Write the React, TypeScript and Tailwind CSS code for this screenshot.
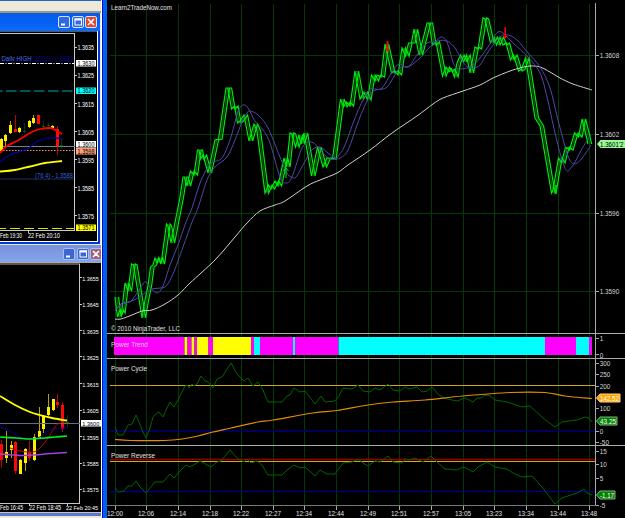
import type { ReactNode } from "react";
import clsx from "clsx";

type Point = [x: number, y: number];
type Candle = [x: number, high: number, low: number, top: number, bottom: number, color: string];

const YELLOW = "#ffee00";
const RED = "#ff0808";
const GREEN = "#005a00";

const gridX = [115, 146, 178, 210, 241, 273, 304, 336, 368, 399, 431, 463, 494, 526, 558, 589];
const times = [
  "12:00", "12:06", "12:14", "12:18", "12:22", "12:27", "12:34", "12:44",
  "12:49", "12:51", "12:57", "13:05", "13:23", "13:34", "13:44", "13:48",
];

const price: Point[] = [
  [115, 297], [117.5, 317], [120, 310], [121.5, 313], [125, 283], [128, 291], [131.5, 264],
  [133.5, 265], [142, 318], [145, 300], [148, 286], [150.5, 267], [153, 265], [155, 258], [157, 263], [159, 258],
  [161, 264], [166.5, 224], [168, 226], [171, 243], [180, 197], [183, 177], [184.5, 177], [187, 186], [190.5, 171],
  [194, 175], [197.5, 150], [199, 150], [200.5, 159], [203, 155], [208, 173], [215, 140], [218.5, 139],
  [221, 122], [226, 88], [228, 88], [231.5, 109], [234.5, 106], [237.5, 123], [240, 121], [244, 115],
  [249, 141], [254, 124], [257, 131], [265, 193], [268.5, 185], [271, 189], [275, 181], [278, 186],
  [284, 158], [286.5, 167], [290, 133], [292, 134], [295.5, 147], [299, 135], [301, 144], [304, 133],
  [311.5, 176], [317.5, 147], [323, 167], [327, 158], [332.5, 159], [340.5, 99], [343.5, 107],
  [346.5, 102], [350, 106], [355, 71], [360, 99], [364, 92], [367.5, 100], [371.5, 75], [375, 81],
  [377, 75], [381, 77], [385, 44], [391.5, 73], [394.5, 71], [398, 75], [402, 48], [405.5, 56], [408.5, 43],
  [411.5, 43], [414, 29], [419, 55], [427, 23], [429, 23], [432.5, 45], [436, 42], [442.5, 76],
  [446, 67], [449, 72], [451.5, 69], [454.5, 77], [457, 63], [460.5, 55], [463.5, 62], [466.5, 55], [470, 73],
  [475, 47], [478, 49], [483, 18], [485, 19], [490.5, 43], [494, 37], [496.5, 45], [500, 37],
  [503, 45], [506, 43], [510.5, 60], [513.5, 55], [518.5, 71], [521.5, 69], [525.5, 58], [535, 118], [540, 126],
  [551.5, 193], [553, 190], [558.5, 158], [561.5, 163], [565.5, 147], [569.5, 150], [574.5, 133],
  [578.5, 137], [582, 119], [586, 135], [588, 144],
];

const fastAverage =
  "115,311 122,303 130,302 137,293 143,284 146,282 151,288 157,293 163,286 170,265 178,245 186,222 192,208 200,183 208,167 213,162 222,158 230,140 238,112 243,105 248,108 255,121 263,130 270,143 280,177 286,183 292,177 302,148 310,142 317,146 327,157 335,159 339,155 345,145 357,113 368,91 374,89 382,88 392,72 399,64 408,67 417,55 427,43 435,42 441,37 447,42 453,62 457,68 462,69 472,66 480,58 488,47 494,37 498,32 503,33 513,43 528,57 540,73 547,97 555,133 562,160 567,171 570,169 575,162 583,147 591,135";
const slowAverage =
  "115,309 125,303 134,300 145,293 152,289 160,288 166,286 173,274 183,247 192,222 198,208 207,180 215,167 227,157 235,140 242,122 247,113 250,111 258,115 268,128 280,157 287,173 291,177 296,177 303,165 312,150 320,147 328,153 335,158 340,158 348,150 360,117 370,95 376,90 387,87 398,70 403,67 410,66 420,58 430,47 438,41 447,41 455,48 463,62 468,67 473,68 480,65 488,52 500,37 508,35 517,40 528,53 540,67 550,88 558,120 567,153 572,163 577,163 583,157 591,145";
const longAverage =
  "115,319 121,319 132,315 142,311 152,310 165,304 178,295 190,283 215,260 235,237 247,223 260,211 275,205 285,201 307,186 320,180 337,173 348,165 370,150 392,133 417,116 433,104 443,98 463,91 480,85 493,78 510,71 520,68 530,66 540,67 550,72 560,78 573,84 592,90";

const trend: [number, number, string][] = [
  [114, 184.5, "#ff00ff"], [184.5, 187.5, "#ffff00"], [187.5, 191.5, "#ff00ff"], [191.5, 194.5, "#ffff00"],
  [194.5, 197, "#ff00ff"], [197, 208.5, "#ffff00"], [208.5, 213, "#ff00ff"], [213, 251, "#ffff00"],
  [251, 254, "#ff00ff"], [254, 260, "#00ffff"], [260, 293, "#ff00ff"], [293, 295, "#00ffff"],
  [295, 338.5, "#ff00ff"], [338.5, 545, "#00ffff"], [545, 576, "#ff00ff"], [576, 589, "#00ffff"],
  [589, 592, "#ff00ff"],
];

const cycle =
  "115,427 118,435 123,435 125,431 128,425 132,424 136,415 139,422 142,430 146,438 150,428 153,417 156,414 159,412 163,417 166,410 170,402 174,407 179,398 185,386 187,385 189,388 192,384 194,386 197,384 201,376 205,381 208,382 213,388 217,379 222,377 231,363 237,374 244,381 248,378 253,386 258,382 262,388 268,402 282,402 287,396 290,395 294,388 300,392 305,391 315,404 321,396 325,402 335,401 339,396 343,388 352,389 358,385 363,391 370,392 375,388 380,390 388,384 393,390 400,391 405,387 409,389 417,387 422,392 427,391 432,387 438,394 443,398 457,401 465,398 473,402 477,398 481,398 485,395 490,396 495,400 507,402 522,407 530,406 543,418 555,427 562,422 568,421 577,420 585,417 589,418 592,422";
const cycleAverage =
  "115,439.5 130,440.5 165,440.5 182,439 198,436 213,432 231,428 258,422 273,420 313,413 337,410.5 368,405 393,402 425,400 463,396 510,392.5 545,392.5 565,396 592,398.5";
const reverse =
  "115,488 118,492 124,491 128,486 132,486 136,481 140,487 146,493 150,488 155,482 163,482 170,474 174,478 180,471 186,465 190,467 195,464 200,461 207,465 211,467 217,462 221,461 230,450 237,458 244,462 247,459 251,463 257,461 262,465 268,475 282,475 287,470 294,465 300,468 305,467 315,476 320,470 327,474 335,474 343,463 352,462 358,459 363,463 368,466 375,461 380,462 388,456 393,462 402,463 405,459 409,460 415,458 423,462 431,456 437,462 445,469 457,470 463,467 466,468 473,472 478,467 487,462 495,467 507,469 513,473 522,477 532,476 542,487 555,504 562,498 568,496 577,493 584,489 587,493 592,495";

const upperCandles: Candle[] = [
  [1.5, 138, 152, 139, 151, YELLOW], [5.5, 134, 148, 135, 141, YELLOW], [10.5, 121, 134, 125, 133, YELLOW],
  [15.5, 115, 132, 129, 132, RED], [19.5, 127, 133, 128, 132, YELLOW], [24.5, 123, 133, 131, 132, GREEN],
  [29.5, 120, 128, 121, 127, YELLOW], [33.5, 115, 124, 118, 123, YELLOW], [38.5, 115, 124, 115, 124, RED],
  [43.5, 121, 131, 126, 127, GREEN], [48.5, 123, 128, 125, 126, GREEN], [52.5, 125, 129, 126, 128, YELLOW],
  [57.5, 126, 155, 129, 146, RED], [61.5, 138, 149, 145, 146, GREEN],
];

const lowerCandles: Candle[] = [
  [1.5, 440, 468, 444, 460, RED], [6.5, 431, 463, 452, 458, YELLOW], [11.5, 441, 458, 445, 450, YELLOW],
  [15.5, 441, 474, 442, 471, RED], [20.5, 459, 474, 460, 474, YELLOW], [25.5, 448, 471, 449, 463, YELLOW],
  [29.5, 441, 461, 452, 458, RED], [34.5, 434, 461, 437, 460, YELLOW], [39.5, 407, 438, 431, 438, YELLOW],
  [43.5, 415, 433, 416, 429, YELLOW], [48.5, 394, 416, 407, 415, YELLOW], [53.5, 399, 411, 399, 410, YELLOW],
  [57.5, 394, 408, 402, 405, RED], [62.5, 402, 432, 405, 429, RED], [67.5, 415, 427, 422, 423, GREEN],
];

const toPoints = (points: Point[], shift = 0) =>
  points.map(([x, y]) => `${x + shift},${y}`).join(" ");

// Catmull-Rom spline through the points, as cubic segments
const toCurve = (source: string) => {
  const pts = source.split(" ").map((pair) => pair.split(",").map(Number));
  let d = `M${pts[0][0]} ${pts[0][1]}`;
  for (let i = 0; i < pts.length - 1; i++) {
    const p0 = pts[i - 1] || pts[i];
    const p1 = pts[i];
    const p2 = pts[i + 1];
    const p3 = pts[i + 2] || p2;
    d += `C${p1[0] + (p2[0] - p0[0]) / 6} ${p1[1] + (p2[1] - p0[1]) / 6} `;
    d += `${p2[0] - (p3[0] - p1[0]) / 6} ${p2[1] - (p3[1] - p1[1]) / 6} ${p2[0]} ${p2[1]}`;
  }
  return d;
};

interface LabelProps {
  x: number;
  y: number;
  width?: number;
  size?: number;
  fill?: string;
  children: ReactNode;
}

function Label({ x, y, width, size = 7.5, fill = "#e0e0e0", children }: LabelProps) {
  return (
    <text x={x} y={y} fontSize={size} fill={fill} textLength={width} lengthAdjust="spacingAndGlyphs">
      {children}
    </text>
  );
}

function Candles({ data }: { data: Candle[] }) {
  return (
    <g shapeRendering="crispEdges">
      {data.map(([x, high, low, top, bottom, color]) => (
        <g key={x} fill={color}>
          <rect x={x - 0.5} y={high} width={1} height={low - high} opacity={0.7} />
          <rect x={x - 1.5} y={top} width={3} height={bottom - top} />
        </g>
      ))}
    </g>
  );
}

function PriceTag({ x, y, color, text }: { x: number; y: number; color: string; text: string }) {
  return (
    <g>
      <rect x={x} y={y - 3.5} width={20} height={6.5} fill={color} />
      <Label x={x + 1.5} y={y + 2.3} width={17} size={6.5} fill="#000">{text}</Label>
    </g>
  );
}

function TitleBar({ active }: { active?: boolean }) {
  return (
    <div
      className={clsx(
        "flex shrink-0 items-center justify-end gap-[1.5px]",
        active
          ? "h-[18px] bg-linear-to-b from-[#0b5be6] via-[#0560f2] to-[#0a6cff] pr-[3px]"
          : "h-[17px] bg-linear-to-b from-[#7791dc] via-[#7f9be4] to-[#83a4ee]"
      )}
    >
      {["min", "max", "close"].map((kind) => (
        <svg
          key={kind}
          className={clsx("h-3 w-3 shrink-0", !active && kind === "close" && "-mr-px")}
          viewBox="0 0 12 12"
        >
          <rect
            x="0.5"
            y="0.5"
            width="11"
            height="11"
            rx="1.5"
            stroke={active ? "#d4e2ff" : "#a9bdf0"}
            fill={kind === "close" ? (active ? "#e0482a" : "#a5607c") : active ? "#2f6ae4" : "#3d67d0"}
          />
          {kind === "min" && <path d="M3 8.500h4" stroke="#fff" strokeWidth="2" />}
          {kind === "max" && (
            <>
              <rect x="3" y="3" width="6.500" height="6" stroke="#fff" fill="none" />
              <path d="M2.500 3.500h7.500" stroke="#fff" strokeWidth="2" />
            </>
          )}
          {kind === "close" && <path d="M3 3l6 6M9 3l-6 6" stroke="#fff" strokeWidth="1.600" />}
        </svg>
      ))}
    </div>
  );
}

function UpperChart() {
  const labels: [string, number][] = [
    ["1.3635", 47.5], ["1.3625", 75.5], ["1.3615", 104], ["1.3605", 132], ["1.3595", 160], ["1.3585", 188], ["1.3575", 216],
  ];
  return (
    <svg className="block h-[210px] w-[97px] overflow-visible bg-black" viewBox="0 31 97 210">
      <rect x="0" y="31" width="97" height="1" fill="#555" />
      <g stroke="#c8c8c8" shapeRendering="crispEdges">
        <path d="M0 33.500H74.500V230.500H0" fill="none" />
        {labels.map(([text, y]) => <path key={text} d={`M75 ${Math.round(y) - 0.5}h2`} />)}
        <path d="M28.500 231v2" />
      </g>
      <Label x={1.5} y={60.8} width={30} size={6.6} fill="#4470e0">Daily HIGH</Label>
      <Label x={33.5} y={60.8} width={39.5} size={6.4} fill="#000088">(100.0) - 1.3630</Label>
      <path d="M0 61.500H74" stroke="#000040" />
      <path d="M0 63.500H74" stroke="#fff" strokeDasharray="4 1.500 1 1.500" />
      <path d="M0 91H74" stroke="#00a8a8" strokeWidth="1.200" strokeDasharray="10.500 3.500" strokeDashoffset="8" />
      <path d="M0 146.500H75" stroke="#708090" shapeRendering="crispEdges" />
      <path d="M0 150.500H74" stroke="#f09068" strokeDasharray="1.500 1.500" />
      <path d="M0 179H74" stroke="#1a2c68" />
      <Label x={35} y={177.5} width={38} size={6.8} fill="#3460cc">(76.4) - 1.3588</Label>
      <path d="M0 228.500H74" stroke="#e0e000" strokeDasharray="10 4" strokeDashoffset="4" />
      <Candles data={upperCandles} />
      <g fill="none">
        <path d={toCurve("0,162 10,155 27,149 38,141 50,138 62,138.5")} stroke="#0000b8" strokeWidth="1.200" />
        <path d={toCurve("0,153 7,146 17,141 25,136 30,133 38,129.5 50,128 55,130 62,134")} stroke="#f00" strokeWidth="1.800" />
        <path d={toCurve("0,171.5 15,170 30,166.5 45,163 62,161")} stroke="#ff0" strokeWidth="1.800" />
      </g>
      {labels.map(([text, y]) => (
        <Label key={text} x={77.5} y={y + 2.5} width={16.5} size={6.5} fill="#fff">{text}</Label>
      ))}
      <PriceTag x={76} y={63.5} color="#fff" text="1.3630" />
      <PriceTag x={76} y={91} color="#00ffff" text="1.3620" />
      <PriceTag x={76} y={144.5} color="#fff" text="1.3600" />
      <PriceTag x={76} y={151.5} color="#ffa07a" text="1.3598" />
      <PriceTag x={76} y={228} color="#ffff00" text="1.3571" />
      <Label x={0} y={238.3} width={22} size={6.5} fill="#fff">Feb 19:30</Label>
      <Label x={28} y={238.3} width={32} size={6.5} fill="#fff">22 Feb 20:10</Label>
    </svg>
  );
}

function LowerChart() {
  const labels: [string, number][] = [
    ["1.3655", 278], ["1.3645", 304.5], ["1.3635", 331], ["1.3625", 357], ["1.3615", 384], ["1.3605", 410.5],
    ["1.3595", 437], ["1.3585", 463.5], ["1.3575", 489.5],
  ];
  return (
    <svg className="block h-[250px] w-[101px] overflow-visible bg-black" viewBox="0 262 101 250">
      <rect x="0" y="262" width="101" height="1" fill="#b0a890" />
      <rect x="0" y="263" width="80" height="2" fill="#555" />
      <g stroke="#c8c8c8" shapeRendering="crispEdges">
        <path d="M79.500 264V503.500H0" fill="none" />
        {labels.map(([text, y]) => <path key={text} d={`M80 ${Math.round(y) - 0.5}h2`} />)}
        <path d="M29.500 503v3M67.500 503v3" />
      </g>
      <Candles data={lowerCandles} />
      <path d="M0 423.500H80" stroke="#607080" shapeRendering="crispEdges" />
      <g fill="none">
        <path d={toCurve("0,427 10,431 20,437 28,439 40,437 48,431 55,428.5 67,428")} stroke="#0000a8" />
        <path d={toCurve("10,448 20,451 33,452 40,448 48,438 55,427 60,423 67,422")} stroke="#c00000" />
        <path d={toCurve("0,454 20,455.5 35,455 50,453.5 67,452.5")} stroke="#a040e0" strokeWidth="1.500" />
        <path d={toCurve("0,437 17,438 30,439 45,438 55,437 67,436")} stroke="#00f020" strokeWidth="1.700" />
        <path d={toCurve("0,396 15,405 30,412 40,415 52,418 67,420.5")} stroke="#ff0" strokeWidth="1.800" />
      </g>
      {labels.map(([text, y]) => (
        <Label key={text} x={82.3} y={y + 2.5} width={16.5} size={6} fill="#fff">{text}</Label>
      ))}
      <rect x={81} y={420} width={20} height={6.5} fill="#fff" />
      <Label x={82.3} y={425.6} width={17} size={6} fill="#000">1.3600</Label>
      <Label x={0} y={510} width={23} size={6.5} fill="#fff">Feb 16:45</Label>
      <Label x={29} y={510} width={32} size={6.5} fill="#fff">22 Feb 18:45</Label>
      <Label x={66} y={510} width={32} size={6} fill="#fff">22 Feb 20:45</Label>
    </svg>
  );
}

function GridLines({ from, to }: { from: number; to: number }) {
  return (
    <g stroke="#003a00" shapeRendering="crispEdges">
      {gridX.map((x) => <path key={x} d={`M${x + 0.5} ${from}V${to}`} />)}
    </g>
  );
}

const textWidth = (text: string) =>
  [...text].reduce((sum, ch) => sum + (ch === "." ? 1.8 : ch === "-" ? 2.2 : 3.55), 0);

// Vertical axis line with tick marks and values
function Axis({ from, to, values }: { from: number; to: number; values: [string, number][] }) {
  return (
    <g>
      <path d={`M595.500 ${from}V${to}`} stroke="#aaa" shapeRendering="crispEdges" />
      {values.map(([text, y]) => (
        <g key={text}>
          <path d={`M596 ${Math.round(y) + 0.5}h3`} stroke="#aaa" shapeRendering="crispEdges" />
          <Label x={599.7} y={y + 3.3} size={7.3} width={textWidth(text)} fill="#d4d4d4">{text}</Label>
        </g>
      ))}
    </g>
  );
}

function ValueFlag({ y, right, fill, border, children }: {
  y: number; right: number; fill: string; border: string; children: string;
}) {
  return (
    <g>
      <path d={`M596.500 ${y}l3.500 -4H${right}v8H600z`} fill={fill} stroke={border} />
      <Label x={600} y={y + 2.8} width={right - 601} size={7.5} fill="#fff">{children}</Label>
    </g>
  );
}

function PricePanel() {
  return (
    <svg className="block h-[333px] w-full overflow-visible" viewBox="107 0 518 333">
      <GridLines from={4} to={333} />
      <path d="M110 55.500H595M110 134.500H595M110 213.500H595M110 291.500H595" stroke="#003a00" shapeRendering="crispEdges" />
      <g fill="none">
        <polyline points={toPoints(price, 1.8)} stroke="#006c00" />
        <polyline points={toPoints(price)} stroke="#00e810" strokeWidth="1.200" />
        <polyline points={toPoints(price, 3.6)} stroke="#00e810" strokeWidth="1.200" />
        <path d={toCurve(longAverage)} stroke="#d0d0d0" />
        <path d={toCurve(fastAverage)} stroke="#5048a8" />
        <path d={toCurve(slowAverage)} stroke="#5048a8" />
      </g>
      <path d="M286 168v10M283.500 171l2.500 -3l2.500 3" stroke="#00e810" fill="none" />
      <path d="M556 185v9" stroke="#00e810" strokeWidth="1.500" />
      <g fill="#f00">
        <path d="M386.500 41h2v8h1.500l-2.500 3l-2.500 -3h1.500z" />
        <path d="M504.500 27h1.500v9h1.500l-2.500 3l-2 -3h1.500z" />
      </g>
      <Axis from={3} to={333} values={[["1.3608", 55], ["1.3602", 134], ["1.3596", 213], ["1.3590", 291]]} />
      <path d="M597 144l3.500 -4H625v8H600.500z" fill="#98fb98" />
      <Label x={600} y={146.7} width={23.5} size={6.8} fill="#000">1.3601'2</Label>
      <Label x={111} y={10} width={61}>Learn2TradeNow.com</Label>
      <Label x={111} y={331} width={69}>© 2010 NinjaTrader, LLC</Label>
    </svg>
  );
}

function TrendPanel() {
  return (
    <svg className="block h-[25px] w-full overflow-visible" viewBox="107 333 518 25">
      <path d="M107 333.500H625" stroke="#aaa" shapeRendering="crispEdges" />
      <GridLines from={334} to={358} />
      {trend.map(([start, end, color]) => (
        <rect key={start} x={start} y="337" width={end - start} height="18" fill={color} />
      ))}
      <Axis from={333} to={358} values={[["1", 337.5], ["0", 354.3]]} />
      <Label x={111} y={346.5} width={37} fill="#e8c8e8">Power Trend</Label>
    </svg>
  );
}

function CyclePanel() {
  return (
    <svg className="block h-[87px] w-full overflow-visible" viewBox="107 358 518 87">
      <path d="M107 358.500H625" stroke="#aaa" shapeRendering="crispEdges" />
      <GridLines from={359} to={445} />
      <path d="M110 385.500H595" stroke="#d0a818" shapeRendering="crispEdges" />
      <path d="M110 431H595" stroke="#000078" strokeWidth="1.500" />
      <g fill="none">
        <polyline points={cycle} stroke="#006400" />
        <path d={toCurve(cycleAverage)} stroke="#e08c08" strokeWidth="1.200" />
      </g>
      <Axis
        from={358}
        to={445}
        values={[["300", 363], ["250", 374], ["200", 386], ["100", 408], ["0", 431], ["-50", 441.6]]}
      />
      <ValueFlag y={398} right={620} fill="#ffa500" border="#ffd890">142.52</ValueFlag>
      <ValueFlag y={421} right={617} fill="#008000" border="#80b080">43.25</ValueFlag>
      <Label x={111} y={371} width={36}>Power Cycle</Label>
    </svg>
  );
}

function ReversePanel() {
  return (
    <svg className="block h-[61px] w-full overflow-visible" viewBox="107 445 518 61">
      <path d="M107 445.500H625" stroke="#aaa" shapeRendering="crispEdges" />
      <GridLines from={446} to={505} />
      <path d="M110 459.500H595" stroke="#980000" strokeWidth="1.500" />
      <path d="M110 461.500H595" stroke="#d8a818" shapeRendering="crispEdges" />
      <path d="M110 491.700H595" stroke="#000090" strokeWidth="1.300" />
      <polyline points={reverse} stroke="#006400" fill="none" />
      <Axis from={445} to={506} values={[["15", 451], ["10", 464], ["5", 478], ["-5", 505]]} />
      <ValueFlag y={495} right={615} fill="#008000" border="#80b080">-1.17</ValueFlag>
      <Label x={111} y={458.3} width={44}>Power Reverse</Label>
    </svg>
  );
}

function TimeAxis() {
  return (
    <svg className="block h-3 w-full overflow-visible" viewBox="107 506 518 12">
      <path d="M107 505.500H596" stroke="#777" />
      {gridX.map((x, i) => (
        <g key={x}>
          <path d={`M${x + 0.5} 506v4`} stroke="#aaa" shapeRendering="crispEdges" />
          <Label x={x - 8} y={516} width={16} size={7.2}>{times[i]}</Label>
        </g>
      ))}
    </svg>
  );
}

export default function App() {
  return (
    <div className="flex h-[518px] w-[625px] overflow-hidden bg-black font-['Liberation_Sans',sans-serif]">
      {/* Terminal windows on the left */}
      <div className="flex w-[101px] shrink-0 flex-col overflow-hidden bg-[#ece9d8]">
        <div className="h-[13px] shrink-0 border-t border-b-2 border-t-[#2460d8] border-b-[#9a988c]" />
        <div className="flex h-[231px] w-[100px] shrink-0 flex-col bg-[#0038d8]">
          <TitleBar active />
          <div className="h-[211px] w-[98px] border-r border-b border-white">
            <UpperChart />
          </div>
        </div>
        <div className="h-px shrink-0 bg-[#ece9d8]" />
        <TitleBar />
        <div className="h-[250px] w-[101px] shrink-0">
          <LowerChart />
        </div>
        <div className="h-px shrink-0 bg-[#c8c4b8]" />
        <div className="h-[3px] shrink-0 bg-[#5878d0]" />
      </div>

      {/* Window edge between both platforms */}
      <div className="flex w-1.5 shrink-0">
        <div className="w-px bg-white" />
        <div className="w-0.5 bg-[#0010c8]" />
        <div className="w-px bg-[#283c50]" />
        <div className="w-2 bg-[#0060f0]" />
      </div>

      <div className="flex min-w-0 flex-1 flex-col bg-black">
        <PricePanel />
        <TrendPanel />
        <CyclePanel />
        <ReversePanel />
        <TimeAxis />
      </div>
    </div>
  );
}
